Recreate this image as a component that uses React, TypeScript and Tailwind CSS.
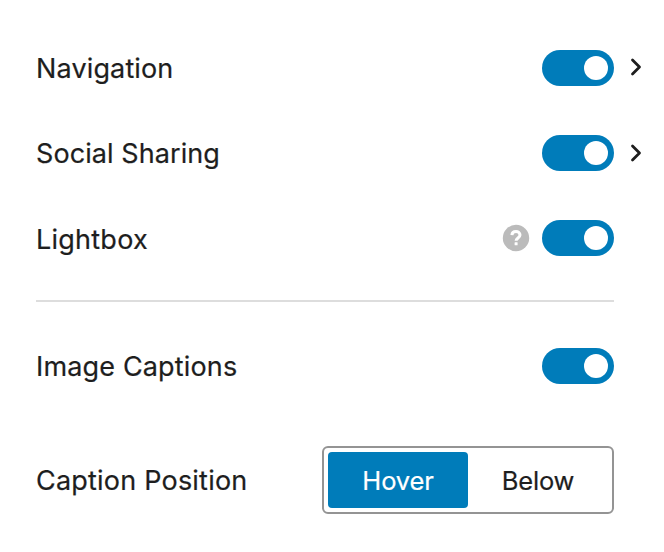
import React from "react";

function Toggle() {
  return (
    <span className="flex h-9 w-[72px] items-center justify-end rounded-full bg-[#007cba] pr-1.5">
      <span className="size-6 rounded-full bg-white" />
    </span>
  );
}

function Chevron() {
  return (
    <svg className="ml-4 h-5 w-3" viewBox="0 0 12 20" fill="none" stroke="#1e1e1e" strokeWidth="2.8" strokeLinecap="round" strokeLinejoin="round">
      <path d="M2.5 3 9.5 10 2.5 17" />
    </svg>
  );
}

function Help() {
  return (
    <svg className="mr-3 size-7" viewBox="0 0 28 28">
      <circle cx="14" cy="14" r="13.2" fill="#bbb" />
      <path d="M9.9 11.2C10.2 6.2 18 6.6 18 11c0 3-3.9 3-3.9 5.8" fill="none" stroke="white" strokeWidth="3" />
      <rect x="12.6" y="18.2" width="3" height="3" rx=".5" fill="white" />
    </svg>
  );
}

export default function App() {
  return (
    <div className="h-[552px] w-[664px] overflow-hidden bg-white pl-9 font-['Inter',sans-serif] text-[27px] leading-9 text-[#1e1e1e] [-webkit-text-stroke:0.2px]">
      <div className="mt-[50px] flex h-9 items-center">
        <span className="w-[506px] pt-0.5 tracking-[0.14px]">Navigation</span>
        <Toggle />
        <span className="pb-[2px]"><Chevron /></span>
      </div>
      <div className="mt-[49px] flex h-9 items-center">
        <span className="w-[506px] pt-0.5 tracking-[0.08px]">Social Sharing</span>
        <Toggle />
        <Chevron />
      </div>
      <div className="mt-[49px] flex h-9 w-[578px] items-center">
        <span className="flex-1 pt-1 tracking-[0.24px]">Lightbox</span>
        <Help />
        <Toggle />
      </div>
      <div className="mt-11 h-0.5 w-[578px] bg-[#ddd]" />
      <div className="mt-[46px] flex h-9 w-[578px] items-center">
        <span className="flex-1 pt-0.5 tracking-[0.16px]">Image Captions</span>
        <Toggle />
      </div>
      <div className="mt-[62px] flex h-[68px] w-[578px] items-center">
        <span className="flex-1 pt-0.5 tracking-[0.21px]">Caption Position</span>
        <div className="flex h-[68px] w-[292px] rounded-md border-2 border-[#949494] p-1 text-[25.5px] tracking-[-0.15px]">
          <span className="flex w-[140px] items-center justify-center rounded bg-[#007cba] pt-0.5 text-white">Hover</span>
          <span className="flex flex-1 items-center justify-center pt-0.5">Below</span>
        </div>
      </div>
    </div>
  );
}
